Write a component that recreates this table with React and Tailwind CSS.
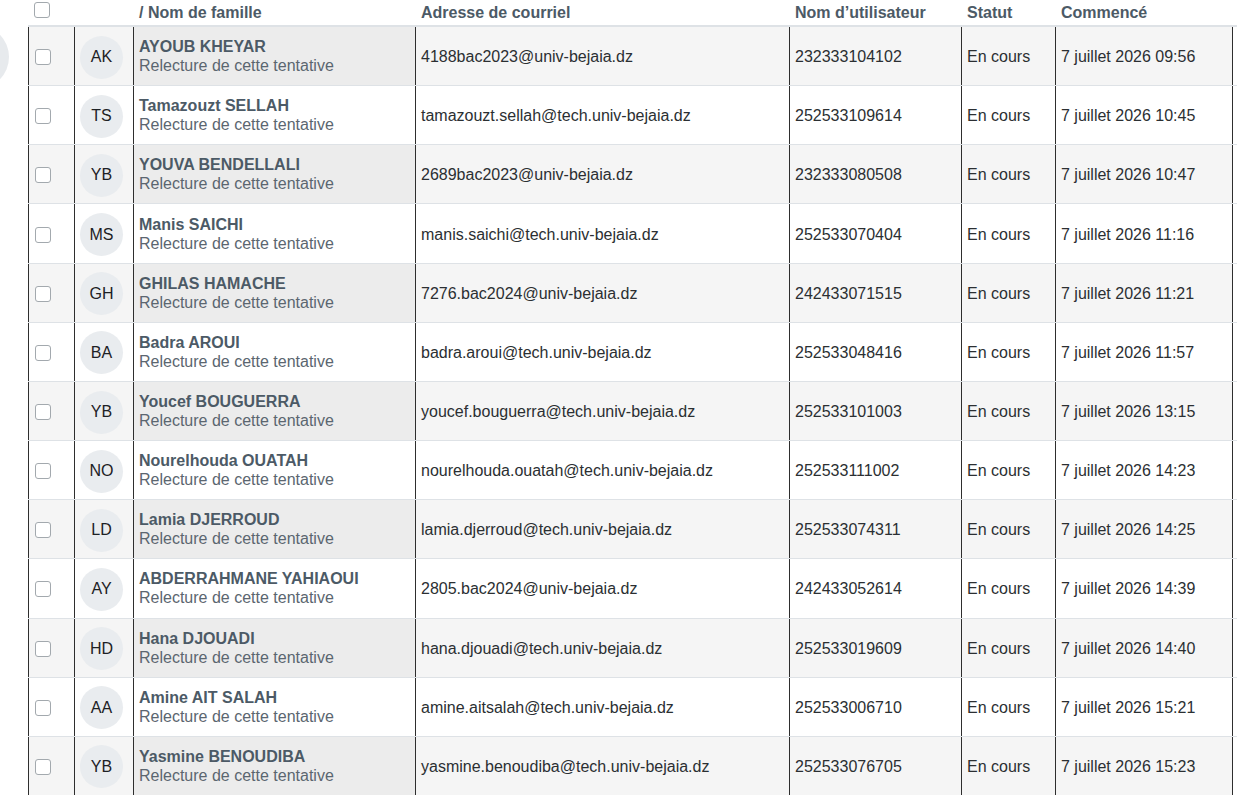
import React from "react";

const rows = [
  ["AK", "AYOUB KHEYAR", "4188bac2023@univ-bejaia.dz", "232333104102", "09:56"],
  ["TS", "Tamazouzt SELLAH", "tamazouzt.sellah@tech.univ-bejaia.dz", "252533109614", "10:45"],
  ["YB", "YOUVA BENDELLALI", "2689bac2023@univ-bejaia.dz", "232333080508", "10:47"],
  ["MS", "Manis SAICHI", "manis.saichi@tech.univ-bejaia.dz", "252533070404", "11:16"],
  ["GH", "GHILAS HAMACHE", "7276.bac2024@univ-bejaia.dz", "242433071515", "11:21"],
  ["BA", "Badra AROUI", "badra.aroui@tech.univ-bejaia.dz", "252533048416", "11:57"],
  ["YB", "Youcef BOUGUERRA", "youcef.bouguerra@tech.univ-bejaia.dz", "252533101003", "13:15"],
  ["NO", "Nourelhouda OUATAH", "nourelhouda.ouatah@tech.univ-bejaia.dz", "252533111002", "14:23"],
  ["LD", "Lamia DJERROUD", "lamia.djerroud@tech.univ-bejaia.dz", "252533074311", "14:25"],
  ["AY", "ABDERRAHMANE YAHIAOUI", "2805.bac2024@univ-bejaia.dz", "242433052614", "14:39"],
  ["HD", "Hana DJOUADI", "hana.djouadi@tech.univ-bejaia.dz", "252533019609", "14:40"],
  ["AA", "Amine AIT SALAH", "amine.aitsalah@tech.univ-bejaia.dz", "252533006710", "15:21"],
  ["YB", "Yasmine BENOUDIBA", "yasmine.benoudiba@tech.univ-bejaia.dz", "252533076705", "15:23"],
];

const cols = "grid grid-cols-[46px_59px_282px_374px_172px_94px_177px_200px]";

function Box() {
  return <span className="block w-[16px] h-[16px] rounded-[3px] border border-[#a3a9ae] bg-white" />;
}

export default function App() {
  return (
    <div className="relative w-screen h-screen overflow-hidden bg-white font-['Liberation_Sans',Arial,sans-serif] text-[16px] text-[#2b2f32]">
      {/* bit of a bubble poking in from the left */}
      <div className="absolute left-[-55px] top-[25px] w-[64px] h-[64px] rounded-full bg-[#e7eaed]" />

      <div className="ml-[28px] w-[1404px]">
        {/* header */}
        <div className={`${cols} h-[27px] border-b-2 border-[#dee2e6] font-bold text-[#4c5a66] leading-[24px]`}>
          <div className="pl-[6px] pt-[2px]"><Box /></div>
          <div />
          <div className="pl-[6px] pt-[1px]">/ Nom de famille</div>
          <div className="pl-[6px] pt-[1px]">Adresse de courriel</div>
          <div className="pl-[6px] pt-[1px]">Nom d’utilisateur</div>
          <div className="pl-[6px] pt-[1px]">Statut</div>
          <div className="pl-[6px] pt-[1px]">Commencé</div>
          <div />
        </div>

        {rows.map(([ini, name, mail, user, time], i) => {
          const odd = i % 2 === 0;
          const bg = odd ? "bg-[#f5f5f5]" : "bg-white";
          const cell = `border-l border-[#2e2e2e] ${bg} flex items-center pl-[5px] pt-[2px]`;
          return (
            <div key={i} className={`${cols} h-[59.17px] border-b border-[#dee2e6]`}>
              <div className={`${cell} pl-[6px]`}><Box /></div>
              <div className={`${cell}`}>
                <span className="w-[43px] h-[43px] rounded-full bg-[#e9ecef] flex items-center justify-center text-[#1d2125] text-[16px]">
                  {ini}
                </span>
              </div>
              <div className={`border-l border-[#2e2e2e] ${odd ? "bg-[#ececec]" : "bg-white"} flex flex-col justify-center pl-[5px] leading-[19px]`}>
                <span className="font-bold text-[#4c5a66]">{name}</span>
                <span className="text-[#5b6670]">Relecture de cette tentative</span>
              </div>
              <div className={cell}>{mail}</div>
              <div className={cell}>{user}</div>
              <div className={cell}>En cours</div>
              <div className={cell}>7 juillet 2026 {time}</div>
              <div className="border-l border-[#2e2e2e] bg-white" />
            </div>
          );
        })}
      </div>
    </div>
  );
}
